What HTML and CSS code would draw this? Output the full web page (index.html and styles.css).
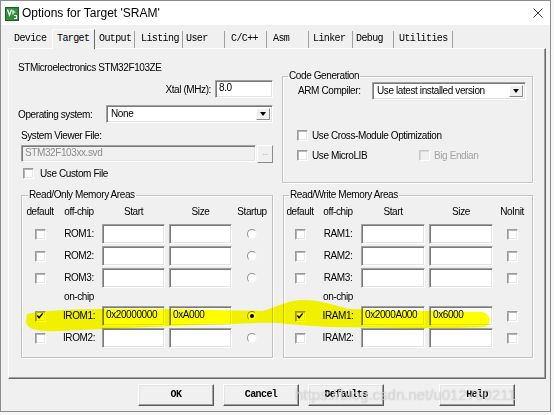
FILE: index.html
```html
<!DOCTYPE html>
<html>
<head>
<meta charset="utf-8">
<title>Options for Target 'SRAM'</title>
<link rel="stylesheet" href="styles.css">
</head>
<body>
<div class="window">
  <div class="titlebar">
    <svg class="app-icon" viewBox="0 0 14 14"><rect x="0.5" y="0.5" width="13" height="13" fill="#2f8f3a" stroke="#1d5e25"/><path d="M2.5 2.5 L4.5 8 L6.5 2.5" stroke="#fff" stroke-width="1.3" fill="none"/><path d="M8 3 L8 7.5 M8 5 L10.5 5 M9 8.5 L11.5 8.5 L11.5 11.5 L9 11.5" stroke="#fff" stroke-width="1.2" fill="none"/></svg>
    <span class="title">Options for Target 'SRAM'</span>
    <svg class="close" viewBox="0 0 10 10"><path d="M0.5 0.5 L9.5 9.5 M9.5 0.5 L0.5 9.5" stroke="#3a3a3a" stroke-width="1"/></svg>
  </div>
  <div class="client">
    <div class="tabs">
      <div class="tab tab-device">Device</div>
      <div class="tab tab-target active">Target</div>
      <div class="tab tab-output">Output</div>
      <div class="tab tab-listing">Listing</div>
      <div class="tab tab-user">User</div>
      <div class="tab tab-cc">C/C++</div>
      <div class="tab tab-asm">Asm</div>
      <div class="tab tab-linker">Linker</div>
      <div class="tab tab-debug">Debug</div>
      <div class="tab tab-util">Utilities</div>
    </div>
    <div class="page">
      <div class="top-row">
        <div class="target-col">
          <div class="device-name">STMicroelectronics STM32F103ZE</div>
          <div class="xtal-row"><span>Xtal (MHz):</span><div class="input xtal">8.0</div></div>
          <div class="os-row"><span>Operating system:</span><div class="select os"><span class="sel-text">None</span><span class="arrow"><span class="tri"></span></span></div></div>
          <div class="svf-label">System Viewer File:</div>
          <div class="svf-row"><div class="input disabled svf">STM32F103xx.svd</div><div class="browse">...</div></div>
          <div class="check-row custom"><span class="cb"></span><span>Use Custom File</span></div>
        </div>
        <fieldset class="group codegen">
          <legend>Code Generation</legend>
          <div class="compiler-row"><span class="compiler-label">ARM Compiler:</span><div class="select compiler"><span class="sel-text">Use latest installed version</span><span class="arrow"><span class="tri"></span></span></div></div>
          <div class="check-row cg-first"><span class="cb"></span><span>Use Cross-Module Optimization</span></div>
          <div class="check-row cg-second"><span class="check-item fixed"><span class="cb"></span><span>Use MicroLIB</span></span><span class="check-item dis"><span class="cb disabled"></span><span>Big Endian</span></span></div>
        </fieldset>
      </div>
      <div class="mem-row">
        <fieldset class="group mem rom">
          <legend>Read/Only Memory Areas</legend>
          <span class="hd c1">default</span><span class="hd">off-chip</span><span class="hd">Start</span><span class="hd">Size</span><span class="hd">Startup</span>
          <span class="cell c1"><span class="cb"></span></span><span class="lbl">ROM1:</span><span class="input"></span><span class="input"></span><span class="cell"><span class="radio"></span></span>
          <span class="cell c1"><span class="cb"></span></span><span class="lbl">ROM2:</span><span class="input"></span><span class="input"></span><span class="cell"><span class="radio"></span></span>
          <span class="cell c1"><span class="cb"></span></span><span class="lbl">ROM3:</span><span class="input"></span><span class="input"></span><span class="cell"><span class="radio"></span></span>
          <span class="lbl onchip">on-chip</span>
          <span class="cell c1"><span class="cb"><svg class="tick" viewBox="0 0 9 9"><path d="M1.5 4 L3.5 6.5 L7.5 1.5" stroke="#000" stroke-width="1.6" fill="none"/></svg></span></span><span class="lbl">IROM1:</span><span class="input">0x20000000</span><span class="input">0xA000</span><span class="cell"><span class="radio on"></span></span>
          <span class="cell c1"><span class="cb"></span></span><span class="lbl">IROM2:</span><span class="input"></span><span class="input"></span><span class="cell"><span class="radio"></span></span>
        </fieldset>
        <fieldset class="group mem ram">
          <legend>Read/Write Memory Areas</legend>
          <span class="hd c1">default</span><span class="hd">off-chip</span><span class="hd">Start</span><span class="hd">Size</span><span class="hd">NoInit</span>
          <span class="cell c1"><span class="cb"></span></span><span class="lbl">RAM1:</span><span class="input"></span><span class="input"></span><span class="cell"><span class="cb"></span></span>
          <span class="cell c1"><span class="cb"></span></span><span class="lbl">RAM2:</span><span class="input"></span><span class="input"></span><span class="cell"><span class="cb"></span></span>
          <span class="cell c1"><span class="cb"></span></span><span class="lbl">RAM3:</span><span class="input"></span><span class="input"></span><span class="cell"><span class="cb"></span></span>
          <span class="lbl onchip">on-chip</span>
          <span class="cell c1"><span class="cb"><svg class="tick" viewBox="0 0 9 9"><path d="M1.5 4 L3.5 6.5 L7.5 1.5" stroke="#000" stroke-width="1.6" fill="none"/></svg></span></span><span class="lbl">IRAM1:</span><span class="input">0x2000A000</span><span class="input">0x6000</span><span class="cell"><span class="cb"></span></span>
          <span class="cell c1"><span class="cb"></span></span><span class="lbl">IRAM2:</span><span class="input"></span><span class="input"></span><span class="cell"><span class="cb"></span></span>
        </fieldset>
      </div>
    </div>
    <div class="buttons">
      <div class="btn">OK</div>
      <div class="btn">Cancel</div>
      <div class="btn">Defaults</div>
      <div class="btn help">Help</div>
    </div>
  </div>
  <svg class="highlight" viewBox="0 0 554 415"><path d="M27,314 C45,310 80,309 120,309 C170,309 220,310 262,311 C275,308 285,301 300,300 C320,299 335,306 350,309 C400,311 450,311 482,312 C492,314 492,325 484,327 C440,329 380,328 330,327 C305,326 290,324 278,323 C260,322 240,324 200,325 C150,327 100,329 60,331 C40,332 27,330 26,322 Z" fill="#ffff00"/></svg>
  <div class="watermark">https://blog.csdn.net/u012760211</div>
</div>
</body>
</html>
```

FILE: styles.css
```css
html, body {
  margin: 0;
  padding: 0;
}
body {
  background: #f7f7f7;
  font-family: "Liberation Sans", Arial, sans-serif;
  font-size: 10px;
  letter-spacing: -0.4px;
  color: #000;
}
.window {
  position: relative;
  width: 551px;
  height: 412px;
  box-sizing: border-box;
  border: 1px solid #8c8c8c;
  background: #f0f0f0;
  display: flex;
  flex-direction: column;
  overflow: hidden;
}
.titlebar {
  flex: none;
  height: 24px;
  background: #fff;
  display: flex;
  align-items: center;
}
.app-icon {
  width: 14px;
  height: 14px;
  margin-left: 4px;
  margin-top: 1px;
}
.title {
  margin-left: 3px;
  font-family: "Liberation Sans", Arial, sans-serif;
  font-size: 12px;
  letter-spacing: 0;
  color: #000;
}
.close {
  width: 10px;
  height: 10px;
  margin-left: auto;
  margin-right: 7px;
}
.client {
  flex: 1;
  padding: 4px 0 0 7px;
}
.tabs {
  display: flex;
  align-items: flex-end;
  height: 19px;
}
.tab {
  box-sizing: border-box;
  height: 17px;
  line-height: 16px;
  border-right: 1px solid #a0a0a0;
  font-family: "Liberation Mono", "DejaVu Sans Mono", monospace;
  font-size: 10px;
  letter-spacing: -0.6px;
  white-space: nowrap;
  color: #000;
}
.tab.active {
  position: relative;
  z-index: 1;
  height: 20px;
  line-height: 17px;
  margin-bottom: -1px;
  background: #f0f0f0;
  border-top: 1px solid #fff;
  border-left: 1px solid #fff;
  border-right: 1px solid #696969;
}
.tab-device { width: 44px; padding-left: 6px; border-right-color: transparent; }
.tab-target { width: 43px; padding-left: 4px; }
.tab-output { width: 40px; padding-left: 4px; }
.tab-listing { width: 48px; padding-left: 6px; }
.tab-user { width: 42px; padding-left: 3px; }
.tab-cc { width: 42px; padding-left: 6px; }
.tab-asm { width: 42px; padding-left: 6px; }
.tab-linker { width: 44px; padding-left: 4px; }
.tab-debug { width: 41px; padding-left: 3px; }
.tab-util { width: 59px; padding-left: 5px; }

.page {
  box-sizing: border-box;
  width: 538px;
  height: 331px;
  border-top: 1px solid #fff;
  border-left: 1px solid #fff;
  border-right: 1px solid #696969;
  border-bottom: 1px solid #696969;
  box-shadow: inset -1px -1px 0 #a0a0a0;
  padding-left: 9px;
}
.top-row {
  display: flex;
  gap: 9px;
}
.target-col {
  width: 255px;
  padding-top: 12px;
}
.device-name {
  line-height: 13px;
}
.xtal-row {
  display: flex;
  justify-content: flex-end;
  align-items: center;
  gap: 4px;
  margin-top: 6px;
  height: 18px;
}
.input {
  box-sizing: border-box;
  display: block;
  background: #fff;
  border: 1px solid;
  border-color: #a0a0a0 #fff #fff #a0a0a0;
  box-shadow: inset 1px 1px 0 #7a7a7a, inset -1px -1px 0 #e3e3e3;
  height: 20px;
  line-height: 16px;
  padding-left: 3px;
  white-space: nowrap;
  overflow: hidden;
}
.input.xtal {
  width: 58px;
  height: 18px;
  line-height: 14px;
}
.os-row {
  display: flex;
  align-items: center;
  margin-top: 7px;
  height: 18px;
}
.select {
  box-sizing: border-box;
  display: flex;
  height: 18px;
  background: #fff;
  border: 1px solid;
  border-color: #a0a0a0 #fff #fff #a0a0a0;
  box-shadow: inset 1px 1px 0 #7a7a7a, inset -1px -1px 0 #e3e3e3;
  padding: 2px;
}
.select.os {
  width: 167px;
  margin-left: auto;
}
.sel-text {
  flex: 1;
  line-height: 12px;
  padding-left: 2px;
  white-space: nowrap;
}
.arrow {
  box-sizing: border-box;
  width: 14px;
  display: flex;
  align-items: center;
  justify-content: center;
  background: #f0f0f0;
  border: 1px solid;
  border-color: #fff #8a8a8a #8a8a8a #fff;
}
.tri {
  width: 0;
  height: 0;
  border-left: 3.5px solid transparent;
  border-right: 3.5px solid transparent;
  border-top: 4px solid #000;
}
.svf-label {
  margin: 6px 0 0 3px;
  line-height: 13px;
}
.svf-row {
  display: flex;
  margin: 3px 0 0 3px;
  height: 17px;
}
.input.svf {
  width: 236px;
  height: 17px;
  line-height: 14px;
}
.input.disabled {
  background: #f0f0f0;
  color: #8d8d8d;
}
.browse {
  box-sizing: border-box;
  width: 16px;
  height: 18px;
  margin-left: 1px;
  background: #f0f0f0;
  border: 1px solid;
  border-color: #fff #8a8a8a #8a8a8a #fff;
  color: #9a9a9a;
  font-size: 8px;
  line-height: 14px;
  text-align: center;
}
.check-row {
  display: flex;
  align-items: center;
  height: 11px;
  line-height: 13px;
}
.check-row .cb,
.check-item .cb {
  margin-right: 4px;
}
.check-row.custom {
  margin: 6px 0 0 5px;
}
.check-row.custom .cb {
  margin-right: 6px;
}
.cb {
  box-sizing: border-box;
  display: inline-flex;
  align-items: center;
  justify-content: center;
  flex: none;
  width: 11px;
  height: 11px;
  background: #fff;
  border: 1px solid;
  border-color: #9a9a9a #fff #fff #9a9a9a;
  box-shadow: inset 1px 1px 0 #b5b5b5, inset -1px -1px 0 #e8e8e8;
}
.cb.disabled {
  background: #f0f0f0;
  border-color: #c8c8c8 #fff #fff #c8c8c8;
  box-shadow: inset 1px 1px 0 #d8d8d8;
}
.tick {
  width: 8px;
  height: 8px;
}

fieldset.group {
  margin: 0;
  padding: 0;
  min-width: 0;
  border: 1px solid #c3c3c3;
  box-shadow: inset 1px 1px 0 #fff, 1px 1px 0 #fff;
}
fieldset.group legend {
  padding: 0 1px;
  line-height: 12px;
}
.codegen {
  width: 251px;
  box-sizing: border-box;
  margin-top: 21px !important;
  padding-bottom: 21px !important;
}
.codegen legend {
  margin-left: 5px;
}
.compiler-row {
  display: flex;
  align-items: center;
  margin-left: 15px;
  height: 18px;
}
.compiler-label {
  width: 74px;
  line-height: 13px;
  margin-top: -2px;
}
.select.compiler {
  width: 154px;
}
.cg-first {
  margin: 30px 0 0 14px;
}
.cg-second {
  margin: 9px 0 0 14px;
}
.check-item {
  display: flex;
  align-items: center;
}
.check-item.fixed {
  width: 122px;
}
.check-item.dis {
  color: #a3a3a3;
}

.mem-row {
  display: flex;
  margin-top: 6px;
}
.mem {
  box-sizing: border-box;
  display: grid;
  column-gap: 4px;
  row-gap: 2px;
  grid-template-rows: 17px 20px 20px 20px 14px 20px 20px;
  padding: 4px 0 9px 2px !important;
}
.rom {
  width: 252px;
  margin-left: 3px !important;
  grid-template-columns: 32px 38px 63px 63px 32px;
}
.rom legend {
  margin-left: 4px;
}
.ram {
  width: 250px;
  margin-left: 10px !important;
  padding-left: 1px !important;
  grid-template-columns: 30px 38px 64px 64px 30px;
}
.ram legend {
  margin-left: 4px;
}
.c1 {
  grid-column: 1;
}
.hd {
  text-align: center;
  line-height: 13px;
  white-space: nowrap;
}
.cell {
  display: flex;
  align-items: center;
  justify-content: center;
}
.lbl {
  text-align: center;
  line-height: 20px;
  white-space: nowrap;
}
.lbl.onchip {
  grid-column: 2;
  line-height: 14px;
}
.mem .input {
  height: 20px;
  line-height: 16px;
}
.radio {
  box-sizing: border-box;
  display: flex;
  align-items: center;
  justify-content: center;
  width: 10px;
  height: 10px;
  border-radius: 50%;
  background: #fff;
  border: 1px solid;
  border-color: #8e8e8e #f4f4f4 #f4f4f4 #8e8e8e;
}
.radio.on::after {
  content: "";
  width: 4px;
  height: 4px;
  border-radius: 50%;
  background: #000;
}

.buttons {
  display: flex;
  gap: 9px;
  margin-top: 5px;
  padding-left: 130px;
}
.btn {
  box-sizing: border-box;
  width: 76px;
  height: 22px;
  background: #f0f0f0;
  border: 1px solid;
  border-color: #fff #5a5a5a #5a5a5a #fff;
  box-shadow: inset -1px -1px 0 #a0a0a0, inset 1px 1px 0 #e3e3e3;
  font-family: "Liberation Mono", "DejaVu Sans Mono", monospace;
  font-size: 10px;
  font-weight: bold;
  letter-spacing: -0.6px;
  line-height: 19px;
  text-align: center;
}
.btn.help {
  margin-left: 46px;
}

.highlight {
  position: absolute;
  left: -1px;
  top: -1px;
  width: 554px;
  height: 415px;
  mix-blend-mode: multiply;
  pointer-events: none;
}
.watermark {
  position: absolute;
  left: 294px;
  top: 385px;
  font-family: "Liberation Sans", Arial, sans-serif;
  font-size: 15px;
  letter-spacing: 0;
  line-height: 17px;
  color: rgba(255, 255, 255, 0.55);
  text-shadow: 0 0 1px rgba(110, 110, 110, 0.55);
  white-space: nowrap;
  pointer-events: none;
}
```
